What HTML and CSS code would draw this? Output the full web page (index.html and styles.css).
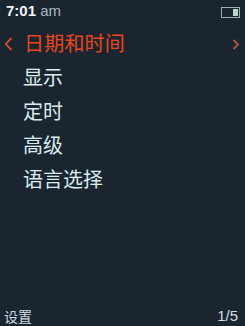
FILE: index.html
```html
<!DOCTYPE html>
<html>
<head>
<meta charset="utf-8">
<link rel="stylesheet" href="styles.css">
</head>
<body>
<div class="screen">
  <div class="status">
    <span class="time"><b>7:01</b> am</span>
    <span class="battery"><span class="level"></span></span>
  </div>
  <div class="title-row">
    <svg class="chev" width="9" height="14" viewBox="0 0 9 14"><path d="M7.5 1 L1.8 7 L7.5 13" fill="none" stroke="#d4552e" stroke-width="1.8"/></svg>
    <span class="title">日期和时间</span>
    <svg class="chev right" width="8" height="11" viewBox="0 0 8 11"><path d="M1.5 1 L6 5.5 L1.5 10" fill="none" stroke="#b0563a" stroke-width="1.8"/></svg>
  </div>
  <ul class="menu">
    <li>显示</li>
    <li>定时</li>
    <li>高级</li>
    <li>语言选择</li>
  </ul>
  <div class="footer">
    <span class="label">设置</span>
    <span class="page">1/5</span>
  </div>
</div>
</body>
</html>
```
FILE: styles.css
```css
* { box-sizing: border-box; }
html, body { margin: 0; padding: 0; }
body { background: #1b2530; }
.screen {
  width: 245px;
  height: 326px;
  background: #1b2530;
  display: flex;
  flex-direction: column;
  font-family: "Noto Sans CJK SC", "Liberation Sans", sans-serif;
  overflow: hidden;
}
.status {
  height: 26px;
  display: flex;
  justify-content: space-between;
  align-items: flex-start;
  padding: 2px 5px 0 6px;
}
.time {
  font-family: "Liberation Sans", sans-serif;
  font-size: 15px;
  line-height: 18px;
  color: #a9b9c2;
}
.time b { color: #f2f6f8; }
.battery {
  margin-top: 5px;
  width: 19px;
  height: 11px;
  border: 1px solid #a2adb3;
  display: flex;
  justify-content: flex-end;
  padding: 1px;
}
.level { width: 5px; background: #b9d6c9; }
.title-row {
  height: 34px;
  display: flex;
  align-items: center;
  padding: 0 5px 0 4px;
  color: #e8461c;
}
.chev { display: block; margin-top: 2px; }
.chev.right { margin-left: auto; margin-top: 3px; }
.title {
  font-size: 20px;
  line-height: 34px;
  margin-left: 11px;
  letter-spacing: 0.2px;
}
.menu {
  list-style: none;
  margin: 0;
  padding: 0 0 0 23px;
  flex: 1;
}
.menu li {
  font-size: 20px;
  line-height: 34px;
  color: #d9ecee;
}
.footer {
  display: flex;
  justify-content: space-between;
  align-items: flex-end;
  padding: 0 7px 1px 4px;
  color: #cfdde4;
  font-size: 14px;
  line-height: 18px;
}
.page { font-family: "Liberation Sans", sans-serif; font-size: 15px; }
```
